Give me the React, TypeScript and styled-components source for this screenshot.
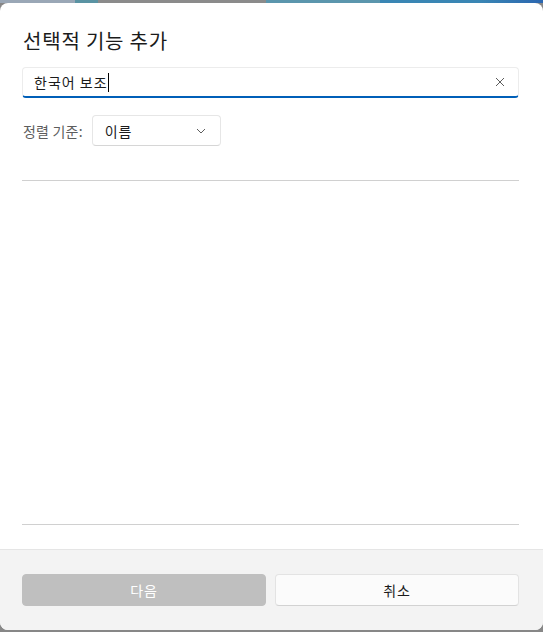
import styled, { createGlobalStyle } from 'styled-components'

const GlobalStyle = createGlobalStyle`
  html, body {
    margin: 0;
    padding: 0;
  }
  body {
    width: 543px;
    height: 632px;
    overflow: hidden;
    font-family: "Noto Sans CJK KR", "Noto Sans", "Liberation Sans", sans-serif;
    background:
      linear-gradient(
          90deg,
          #9aa7b6 0 75px,
          #5a93a3 75px 98px,
          #8b8b8b 98px 266px,
          #5b96ad 266px 380px,
          #3a86b4 380px 480px,
          #2b66b0 100%
        )
        top / 100% 3px no-repeat,
      #878787;
  }
`

const Dialog = styled.div`
  margin-top: 3px;
  height: 627px;
  background: #ffffff;
  border-radius: 8px;
  overflow: hidden;
  display: flex;
  flex-direction: column;
  box-sizing: border-box;
`

const Content = styled.div`
  flex: 1;
  display: flex;
  flex-direction: column;
  padding: 24px 24px 24px 22px;
  min-height: 0;
`

const Title = styled.h1`
  margin: 0 0 0 1px;
  font-size: 20px;
  line-height: 28px;
  font-weight: 400;
  color: #1b1b1b;
  letter-spacing: 0.8px;
`

const SearchBox = styled.div`
  margin-top: 12px;
  height: 31px;
  box-sizing: border-box;
  display: flex;
  align-items: center;
  padding: 0 11px 0 11px;
  background: #ffffff;
  border: 1px solid #ececec;
  border-bottom: 2px solid #005fb8;
  border-radius: 4px;
`

const SearchText = styled.span`
  flex: 1;
  display: flex;
  align-items: center;
  font-size: 14px;
  letter-spacing: 1px;
  color: #1b1b1b;
`

const Caret = styled.span`
  display: inline-block;
  width: 1px;
  height: 19px;
  background: #000000;
`

const ClearButton = styled.span`
  display: flex;
  align-items: center;
  justify-content: center;
  width: 14px;
  height: 14px;
  color: #5d5d5d;
`

const SortRow = styled.div`
  margin-top: 17px;
  display: flex;
  align-items: center;
  gap: 9px;
`

const SortLabel = styled.span`
  margin-left: 1px;
  font-size: 14px;
  letter-spacing: 0.2px;
  color: #5d5d5d;
`

const Select = styled.div`
  width: 129px;
  height: 31px;
  box-sizing: border-box;
  display: flex;
  align-items: center;
  justify-content: space-between;
  padding: 0 14px 0 12px;
  background: #ffffff;
  border: 1px solid #e6e6e6;
  border-bottom-color: #d6d6d6;
  border-radius: 4px;
  font-size: 14px;
  letter-spacing: 0.8px;
  color: #1b1b1b;
`

const List = styled.div`
  flex: 1;
  margin-top: 34px;
  border-top: 1px solid #d0d0d0;
  border-bottom: 1px solid #d0d0d0;
`

const Footer = styled.div`
  display: grid;
  grid-template-columns: 1fr 1fr;
  gap: 9px;
  padding: 24px 24px 24px 22px;
  background: #f3f3f3;
  border-top: 1px solid #e5e5e5;
`

const Button = styled.button<{ $disabled?: boolean }>`
  height: 32px;
  box-sizing: border-box;
  border-radius: 4px;
  font-family: inherit;
  font-size: 14px;
  letter-spacing: 0.8px;
  border: 1px solid ${(p) => (p.$disabled ? '#bfbfbf' : '#e3e3e3')};
  border-bottom-color: ${(p) => (p.$disabled ? '#bfbfbf' : '#d2d2d2')};
  background: ${(p) => (p.$disabled ? '#bfbfbf' : '#fbfbfb')};
  color: ${(p) => (p.$disabled ? '#ffffff' : '#1b1b1b')};
  cursor: default;
`

export default function App() {
  return (
    <>
      <GlobalStyle />
      <Dialog>
        <Content>
          <Title>선택적 기능 추가</Title>
          <SearchBox>
            <SearchText>
              한국어 보조
              <Caret />
            </SearchText>
            <ClearButton>
              <svg width="10" height="10" viewBox="0 0 10 10">
                <path
                  d="M1 1 L9 9 M9 1 L1 9"
                  stroke="currentColor"
                  strokeWidth="1"
                  fill="none"
                />
              </svg>
            </ClearButton>
          </SearchBox>
          <SortRow>
            <SortLabel>정렬 기준:</SortLabel>
            <Select>
              <span>이름</span>
              <svg width="10" height="6" viewBox="0 0 10 6">
                <path
                  d="M1 1 L5 5 L9 1"
                  stroke="#5d5d5d"
                  strokeWidth="1"
                  fill="none"
                />
              </svg>
            </Select>
          </SortRow>
          <List />
        </Content>
        <Footer>
          <Button $disabled>다음</Button>
          <Button>취소</Button>
        </Footer>
      </Dialog>
    </>
  )
}
